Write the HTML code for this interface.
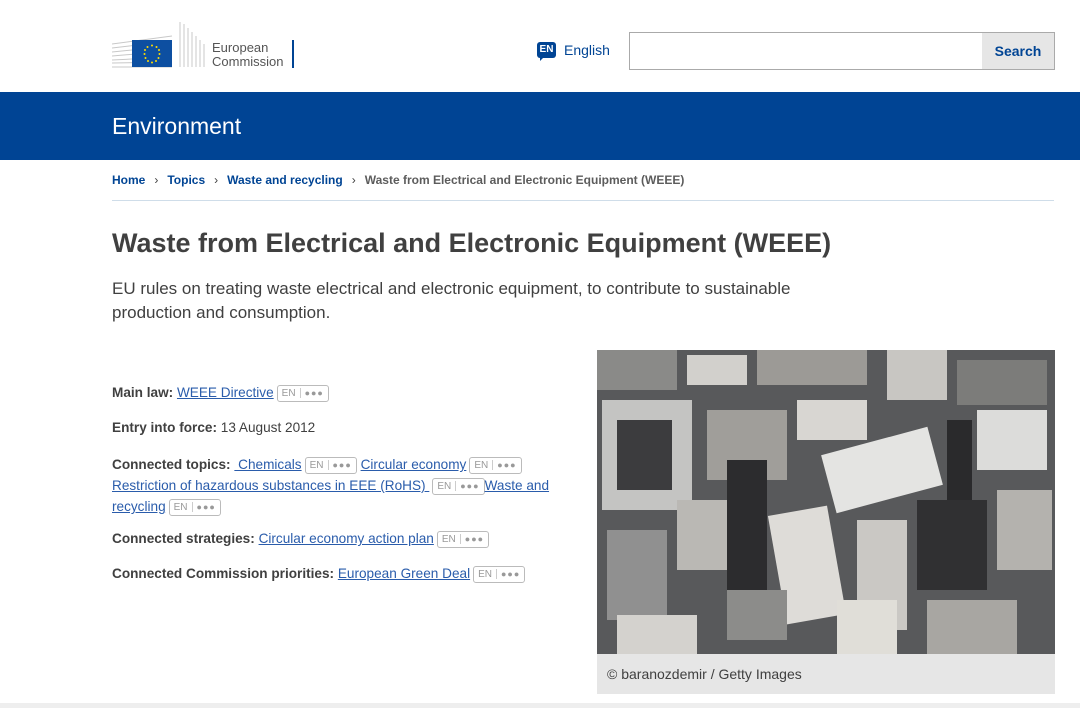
<!DOCTYPE html>
<html><head><meta charset="utf-8"><style>
*{margin:0;padding:0;box-sizing:border-box}
body{width:1080px;height:708px;overflow:hidden;background:#fff;font-family:"Liberation Sans",Arial,sans-serif;color:#404040;position:relative}
a{color:#004494}
.abs{position:absolute}
.tag{display:inline-block;border:1px solid #bbb;border-radius:3px;font-size:10px;color:#999;padding:0 4px;height:17px;line-height:15px;vertical-align:1px;margin-left:3px;text-decoration:none}
.tag span{border-left:1px solid #ccc;margin-left:4px;padding-left:4px;letter-spacing:1px;font-size:9px}
p.f{position:absolute;left:112px;font-size:13.6px;white-space:nowrap}
p.f a{color:#2a5cab;text-decoration:underline}
p.f b{color:#404040}
.sep{margin:0 9px;color:#404040}
</style></head><body>
<svg class="abs" style="left:112px;top:30px" width="70" height="40">
<g stroke="#c8c8c8" stroke-width="1">
<line x1="0" y1="14" x2="60" y2="6"/><line x1="0" y1="18" x2="60" y2="11"/><line x1="0" y1="22" x2="60" y2="16"/><line x1="0" y1="26" x2="60" y2="21"/><line x1="0" y1="30" x2="60" y2="27"/><line x1="0" y1="33" x2="60" y2="32"/><line x1="0" y1="37" x2="60" y2="37"/></g>
<rect x="20" y="10" width="40" height="27" fill="#0d4fa1"/>
<g fill="#ffdd00"><circle cx="40" cy="15.5" r="1"/><circle cx="44.5" cy="17" r="1"/><circle cx="47" cy="20" r="1"/><circle cx="47.5" cy="24" r="1"/><circle cx="46.5" cy="28" r="1"/><circle cx="44" cy="31" r="1"/><circle cx="40" cy="32.5" r="1"/><circle cx="36" cy="31" r="1"/><circle cx="33.5" cy="28" r="1"/><circle cx="32.5" cy="24" r="1"/><circle cx="33" cy="20" r="1"/><circle cx="35.5" cy="17" r="1"/></g>
</svg>
<svg class="abs" style="left:178px;top:22px" width="30" height="48"><g stroke="#c8c8c8"><line x1="2" y1="0" x2="2" y2="45"/><line x1="6" y1="2" x2="6" y2="45"/><line x1="10" y1="6" x2="10" y2="45"/><line x1="14" y1="10" x2="14" y2="45"/><line x1="18" y1="14" x2="18" y2="45"/><line x1="22" y1="18" x2="22" y2="45"/><line x1="26" y1="22" x2="26" y2="45"/></g></svg>
<div class="abs" style="left:212px;top:41px;font-size:13px;line-height:14px;color:#555">European<br>Commission</div>
<div class="abs" style="left:292px;top:40px;width:2px;height:28px;background:#004494"></div>
<div class="abs" style="left:537px;top:42px;width:19px;height:16px;background:#004494;border-radius:3px;color:#fff;font-size:10px;font-weight:bold;text-align:center;line-height:16px">EN</div>
<div class="abs" style="left:540px;top:57px;width:0;height:0;border-left:4px solid #004494;border-bottom:4px solid transparent"></div>
<div class="abs" style="left:564px;top:42px;font-size:14px;color:#004494">English</div>
<div class="abs" style="left:629px;top:32px;width:426px;height:38px;border:1px solid #aaa"></div>
<div class="abs" style="left:982px;top:33px;width:72px;height:36px;background:#e6e6e6;color:#004494;font-weight:bold;font-size:14px;text-align:center;line-height:36px">Search</div>
<div class="abs" style="left:0;top:92px;width:1080px;height:68px;background:#004494;color:#fff;font-size:23px;padding:21px 0 0 112px">Environment</div>
<div class="abs" style="left:112px;top:173px;font-size:12px;white-space:nowrap"><a style="text-decoration:none;font-weight:bold">Home</a><span class="sep">›</span><a style="text-decoration:none;font-weight:bold">Topics</a><span class="sep">›</span><a style="text-decoration:none;font-weight:bold">Waste and recycling</a><span class="sep">›</span><span style="color:#404040;font-weight:bold;opacity:.85">Waste from Electrical and Electronic Equipment (WEEE)</span></div>
<div class="abs" style="left:112px;top:200px;width:942px;height:1px;background:#cfdde9"></div>
<div class="abs" style="left:112px;top:228px;font-size:27px;font-weight:bold;color:#404040;white-space:nowrap">Waste from Electrical and Electronic Equipment (WEEE)</div>
<div class="abs" style="left:112px;top:277px;font-size:17px;line-height:24px;color:#404040;width:700px">EU rules on treating waste electrical and electronic equipment, to contribute to sustainable production and consumption.</div>
<p class="f" style="top:385px"><b>Main law:</b> <a>WEEE Directive</a><span class="tag">EN<span>●●●</span></span></p>
<p class="f" style="top:420px"><b>Entry into force:</b> 13 August 2012</p>
<p class="f" style="top:454px;line-height:21px;white-space:normal;width:450px"><b>Connected topics:</b> <a>&nbsp;Chemicals</a><span class="tag">EN<span>●●●</span></span> <a>Circular economy</a><span class="tag">EN<span>●●●</span></span><br><a>Restriction of hazardous substances in EEE (RoHS)&nbsp;</a><span class="tag">EN<span>●●●</span></span><a>Waste and recycling</a><span class="tag">EN<span>●●●</span></span></p>
<p class="f" style="top:531px"><b>Connected strategies:</b> <a>Circular economy action plan</a><span class="tag">EN<span>●●●</span></span></p>
<p class="f" style="top:566px"><b>Connected Commission priorities:</b> <a>European Green Deal</a><span class="tag">EN<span>●●●</span></span></p>
<svg class="abs" style="left:597px;top:350px" width="458" height="304">
<rect width="458" height="304" fill="#58595b"/>
<g fill="#b8b8b6">
<rect x="0" y="0" width="80" height="40" fill="#8a8a88"/><rect x="90" y="5" width="60" height="30" fill="#d2d0cc"/><rect x="160" y="0" width="110" height="35" fill="#9c9a96"/><rect x="290" y="0" width="60" height="50" fill="#c8c6c2"/><rect x="360" y="10" width="90" height="45" fill="#7c7c7a"/>
<rect x="5" y="50" width="90" height="110" fill="#c4c4c2"/><rect x="20" y="70" width="55" height="70" fill="#3c3c3e"/><rect x="110" y="60" width="80" height="70" fill="#a09e9a"/><rect x="200" y="50" width="70" height="40" fill="#d8d6d2"/><rect x="230" y="90" width="110" height="60" fill="#e4e4e2" transform="rotate(-15 285 120)"/><rect x="380" y="60" width="70" height="60" fill="#dcdcda"/>
<rect x="10" y="180" width="60" height="90" fill="#909090"/><rect x="80" y="150" width="90" height="70" fill="#bab8b4"/><rect x="180" y="160" width="60" height="110" fill="#dedcd8" transform="rotate(-10 210 215)"/><rect x="260" y="170" width="50" height="110" fill="#cac8c4"/><rect x="320" y="150" width="70" height="90" fill="#303032"/><rect x="400" y="140" width="55" height="80" fill="#b4b2ae"/>
<rect x="20" y="265" width="80" height="39" fill="#d4d2ce"/><rect x="130" y="240" width="60" height="50" fill="#8c8c8a"/><rect x="240" y="250" width="60" height="54" fill="#e0ded8"/><rect x="330" y="250" width="90" height="54" fill="#a8a6a2"/>
<rect x="130" y="110" width="40" height="130" fill="#2c2c2e"/><rect x="350" y="70" width="25" height="80" fill="#2a2a2c"/>
</g></svg>
<div class="abs" style="left:597px;top:654px;width:458px;height:40px;background:#e6e6e6;font-size:14px;padding:12px 10px;color:#404040">© baranozdemir / Getty Images</div>
<div class="abs" style="left:0;top:703px;width:1080px;height:5px;background:#eee"></div>
</body></html>
